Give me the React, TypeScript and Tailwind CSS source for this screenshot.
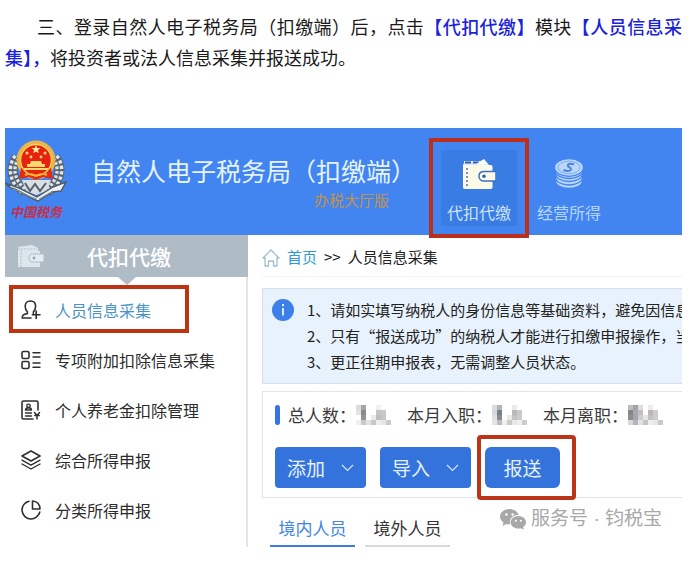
import type { ReactNode } from 'react';

const menuItems = [
  { label: '人员信息采集', icon: <UserAddIcon />, active: true },
  { label: '专项附加扣除信息采集', icon: <ListIcon /> },
  { label: '个人养老金扣除管理', icon: <PensionIcon /> },
  { label: '综合所得申报', icon: <LayersIcon /> },
  { label: '分类所得申报', icon: <PieIcon /> },
];

// Greys of the masked figures, 7 columns by 4 rows, '' leaves a cell blank
const masks = {
  total: [
    ['#dcdcdc', '#a5a5a5', '', '', '#f0f0f0', '', ''],
    ['#e3e3e3', '#8a8a8a', '', '', '#c4c4c4', '#c9c9c9', ''],
    ['', '#929292', '', '#e9e9e9', '#bdbdbd', '#c6c6c6', ''],
    ['#efefef', '#c9c9c9', '#e2e2e2', '#c8c8c8', '#ededed', '#e5e5e5', '#cbcbcb'],
  ],
  joined: [
    ['#dadada', '#b5b5b5', '', '', '#ececec', '', ''],
    ['#d3dadf', '#78818b', '', '', '#bdb9b5', '#c9c9c9', ''],
    ['#dfe2e2', '#858b92', '', '#e9e9e9', '#c5c2bf', '#cccccc', ''],
    ['#e5e5e5', '#bdbdbd', '#eeeeee', '#cacaca', '#e7e7e7', '#efefef', '#cccccc'],
  ],
  left: [
    ['#bcbcbc', '#a3a3a3', '#dedede', '', '#ededed', '', ''],
    ['#858585', '#a7a9b8', '#c8bdb0', '', '#b7b7b7', '#cdcdcd', ''],
    ['#8d8d8d', '#a3a6af', '#c7cdd6', '#e5e5e5', '#c1c1c1', '#cccccc', ''],
    ['#d9d9d9', '#b4b4b4', '#e3e3e3', '#c5c5c5', '#eeeeee', '#e5e5e5', '#c9c9c9'],
  ],
};

function Mosaic({ cells }: { cells: string[][] }) {
  return (
    <svg width="35" height="20" viewBox="0 0 35 20" className="shrink-0" aria-label="已隐藏" shapeRendering="crispEdges">
      {cells.map((row, y) =>
        row.map((fill, x) => fill && <rect key={`${x}-${y}`} x={x * 5} y={y * 5} width="5" height="5" fill={fill} />)
      )}
    </svg>
  );
}

function LineIcon({ children }: { children: ReactNode }) {
  return (
    <svg width="20" height="20" viewBox="0 0 20 20" fill="none" stroke="#2f2f2f" strokeWidth="1.6" strokeLinejoin="round" strokeLinecap="round" className="shrink-0">
      {children}
    </svg>
  );
}

function UserAddIcon() {
  return (
    <LineIcon>
      <path d="M10 18H1.200c0-2.600.8-3.600 5.200-4.400v-1.800C4.800 10.500 4.200 8.500 4.200 6.200 4.200 3 6.300 1 9.400 1s5.200 2 5.200 5.200c0 2.300-.7 4.300-2.200 5.600v1.700" />
      <path d="M15.200 11v7.500M11.400 14.800H19" />
    </LineIcon>
  );
}

function ListIcon() {
  return (
    <LineIcon>
      <rect x="1" y="1.500" width="7" height="7" rx="1.500" />
      <rect x="1" y="11.500" width="7" height="7" rx="1.500" />
      <path d="M12 2.800h7M12 7h7M12 13h7M12 17.200h7" strokeWidth="1.400" />
    </LineIcon>
  );
}

function PensionIcon() {
  return (
    <LineIcon>
      <path d="M17 10V2.500C17 1.500 16.500 1 15.500 1h-13C1.500 1 1 1.500 1 2.500v15c0 1 .5 1.500 1.500 1.500H12" />
      <circle cx="7.500" cy="5.800" r="1.700" strokeWidth="1.400" />
      <path d="M4.500 10c0-3 6-3 6 0zM4.500 13h6M4.500 16h6" strokeWidth="1.400" />
      <path d="M13.500 12.500l2.500 3 2.500-3M16 15.500V19M13.800 15.500h4.400" strokeWidth="1.500" />
    </LineIcon>
  );
}

function LayersIcon() {
  return (
    <LineIcon>
      <path d="M10 1l9 5-9 5-9-5z" />
      <path d="M1 10.200l9 5 9-5M1 14l9 5 9-5" strokeWidth="1.400" />
    </LineIcon>
  );
}

function PieIcon() {
  return (
    <LineIcon>
      <path d="M8 1.200A9 9 0 1 0 18.800 12" />
      <path d="M11.500 1v8H19c0-4.500-3-8-7.500-8z" />
    </LineIcon>
  );
}

function WalletIcon() {
  return (
    <svg width="34" height="34" viewBox="0 0 34 34">
      <path d="M2 3h17l5 4H2z" fill="#dcebff" />
      <path d="M3 4.500h22" stroke="#2f5cae" strokeWidth="2" strokeDasharray="6 2" />
      <path d="M14 6l8-5 5 6z" fill="#fff" />
      <path d="M1 4.500C1 6.500 2 7 4 7h24.500c1.500 0 2 .7 2 2v20c0 1.500-.7 2-2 2H3c-1.500 0-2-.7-2-2z" fill="#fbfae6" />
      <path d="M5 10v19" stroke="#5a78ad" strokeWidth="1.600" strokeDasharray="2 2" />
      <path d="M34 13.500H22c-3 0-5 2-5 4.700s2 4.800 5 4.800h12z" fill="#fbfae6" stroke="#3b70c9" strokeWidth="1.500" />
      <circle cx="22" cy="18.200" r="1.800" fill="#3563b3" />
    </svg>
  );
}

function CoinsIcon() {
  return (
    <svg width="30" height="32" viewBox="0 0 30 32" fill="none">
      <g fill="#b9d5fb" stroke="#4285ee" strokeWidth="1.300">
        <ellipse cx="15" cy="23" rx="13.500" ry="7.500" />
        <ellipse cx="15" cy="19.500" rx="13.500" ry="7.500" />
        <ellipse cx="15" cy="16" rx="13.500" ry="7.500" />
        <ellipse cx="15" cy="12.500" rx="14" ry="8" />
        <ellipse cx="15" cy="9.500" rx="14.500" ry="8.800" />
      </g>
      <ellipse cx="15" cy="9.500" rx="11" ry="6.300" stroke="#80b0f4" />
      <path d="M20 6.500c-4-1.500-7-.5-6 1.500.8 1.600 3.500 1.500 3 3.500-.6 1.800-4 2-7.500.5" stroke="#4c83d8" strokeWidth="2" />
    </svg>
  );
}

function Emblem() {
  return (
    <svg width="62" height="64" viewBox="0 0 62 64" fill="none">
      {/* wheat wreath */}
      <path d="M12 17C4 28 7 42 20 52M50 17c8 11 5 25-8 35" stroke="#56636f" strokeWidth="10" />
      <path d="M12 17C4 28 7 42 20 52M50 17c8 11 5 25-8 35" stroke="#dfe7ec" strokeWidth="8" strokeDasharray="3 2" />
      <path d="M12 17C4 28 7 42 20 52M50 17c8 11 5 25-8 35" stroke="#5d6a75" strokeWidth="1.300" />
      <path d="M17 40h29l-4 11-11 4-10-4z" fill="#d9e0e4" />
      <path d="M20 43l5 8 5-7 5 7 6-8" stroke="#56616b" strokeWidth="2" />
      {/* open book */}
      <path d="M0 43l14 5 18 9 16-10 13-5-5 9-9 1-14 9c-10-3-17-11-27-13z" fill="#eff3f5" stroke="#4e5c69" strokeWidth="1.400" />
      <path d="M8 49c8 2 16 8 24 10M34 59l14-8" stroke="#89959e" />
      {/* national emblem */}
      <circle cx="31" cy="20" r="19.500" fill="#e9b449" />
      <path d="M16 28l-2 11 10-2 7 3 7-3 10 2-2-11z" fill="#e32b13" />
      <circle cx="31" cy="20" r="15.500" fill="#e7230f" stroke="#f6cf58" strokeWidth="1.500" />
      <path d="M31 5l1.200 3 3.300.1-2.600 2 .9 3.100-2.800-1.800-2.800 1.800.9-3.100-2.600-2 3.300-.1z" fill="#ffeaa0" />
      <g fill="#ffd970">
        <circle cx="22" cy="13" r="1.500" />
        <circle cx="40" cy="13" r="1.500" />
        <circle cx="26" cy="17" r="1.400" />
        <circle cx="36" cy="17" r="1.400" />
        <path d="M25 24l1-3h10l1 3h3v3H22v-3z" />
        <path d="M19 28h24v2H19z" />
      </g>
      <path d="M20 35c4-2 7-1 11 1 4-2 7-3 11-1" stroke="#f2b13a" strokeWidth="2" />
    </svg>
  );
}

function Chevron() {
  return (
    <svg width="13" height="8" viewBox="0 0 13 8" fill="none" stroke="#d5e6ff" strokeWidth="1.200">
      <path d="M1 1l5.500 5.500L12 1" />
    </svg>
  );
}

function TopBar() {
  return (
    <header className="flex items-start bg-[#4285f1]">
      <div className="flex w-[62px] shrink-0 flex-col items-center pt-3">
        <Emblem />
        <span className="whitespace-nowrap font-['Noto_Sans_CJK_SC',sans-serif] text-[13px] font-bold italic leading-4 text-[#c5304a]">中国税务</span>
      </div>
      <div className="ml-6 shrink-0 pt-[26px]">
        <h1 className="whitespace-nowrap text-[25px] leading-8 text-[#e4f3ff]">自然人电子税务局（扣缴端）</h1>
        <p className="pr-[27px] text-right text-[15px] leading-7 text-[#c2924a]">办税大厅版</p>
      </div>
      <nav className="ml-[13px] flex shrink-0 items-start gap-2 pt-2.5">
        <div className="relative z-10 -mb-[3px] border-4 border-[#bb301d] bg-[#4285f1] p-2">
          <button type="button" className="flex h-[76px] w-[76px] flex-col items-center justify-between bg-[#397ce3] pb-0.5 pt-2 text-base leading-6 text-[#cfe3ff]">
            <WalletIcon />
            代扣代缴
          </button>
        </div>
        <button type="button" className="mt-3 flex h-[76px] flex-col items-center justify-between pb-0.5 pt-2 text-base leading-6 text-[#b5d3ff]">
          <CoinsIcon />
          经营所得
        </button>
      </nav>
    </header>
  );
}

function Sidebar() {
  return (
    <aside className="w-[243px] shrink-0 border-r-2 border-[#e3e5e8]">
      <div className="relative -mr-0.5 flex h-[42px] items-center bg-[#afbbc5] pl-3">
        <svg width="27" height="25" viewBox="0 0 27 25">
          <path d="M1 3l14-2 6 3v3h2v16H1z" fill="#dde6ec" />
          <path d="M4 6v17M1 5h19" stroke="#b5c0c9" strokeDasharray="2 1" />
          <path d="M27 10H15c-4 0-4 8 0 8h12z" fill="#e3ebf0" stroke="#afbbc5" />
          <circle cx="17" cy="14" r="1.400" fill="#98a5b0" />
        </svg>
        <h2 className="ml-[43px] text-[21px] font-medium leading-7 text-white">代扣代缴</h2>
        <svg width="18" height="8" viewBox="0 0 18 8" className="absolute left-[113px] top-full">
          <path d="M0 0h18L9 8z" fill="#afbbc5" />
        </svg>
      </div>
      <ul className="pb-3 pt-2">
        {menuItems.map((item) => (
          <li key={item.label} className="relative">
            {item.active && <span className="pointer-events-none absolute bottom-0.5 left-1 top-0 w-[180px] border-4 border-[#bd3413]" />}
            <a href="#" className={`flex h-[50px] items-center gap-3.5 pl-4 text-base ${item.active ? 'text-[#4a94c5]' : 'text-[#2b2b2b]'}`}>
              {item.icon}
              {item.label}
            </a>
          </li>
        ))}
      </ul>
    </aside>
  );
}

function Notice() {
  return (
    <div className="mt-[11px] flex items-start border border-r-0 border-[#d3e0e9] bg-[#e8f2fc] py-2 pl-[9px] text-[15px] leading-[26px] text-[#222]">
      <svg width="22" height="22" viewBox="0 0 22 22" className="mr-[13px] mt-0.5 shrink-0">
        <circle cx="11" cy="11" r="11" fill="#3d7fe9" />
        <path d="M11 5v2.300M11 9v7.500" stroke="#dcecff" strokeWidth="2" />
      </svg>
      <div className="min-w-0 overflow-hidden whitespace-nowrap">
        <p>1、请如实填写纳税人的身份信息等基础资料，避免因信息</p>
        <p>2、只有“报送成功”的纳税人才能进行扣缴申报操作，当</p>
        <p>3、更正往期申报表，无需调整人员状态。</p>
      </div>
    </div>
  );
}

function ActionPanel() {
  return (
    <section className="mt-[7px] border border-r-0 border-[#e3e3e3] pb-[9px] pl-3 pt-[11px]">
      <div className="flex h-6 items-center whitespace-nowrap text-[17px] leading-6 text-[#3a3a3a]">
        <span className="mr-2 h-5 w-[5px] shrink-0 rounded-sm bg-[#3474e6]" />
        <span>总人数：</span>
        <Mosaic cells={masks.total} />
        <span className="ml-4">本月入职：</span>
        <Mosaic cells={masks.joined} />
        <span className="ml-4">本月离职：</span>
        <Mosaic cells={masks.left} />
      </div>
      <div className="mt-5 flex items-center gap-3.5 text-[19px] leading-[41px] text-[#e6f1ff]">
        <button type="button" className="flex w-[91px] items-center justify-between rounded bg-[#3573dc] px-3">
          添加
          <Chevron />
        </button>
        <button type="button" className="flex w-[91px] items-center justify-between rounded bg-[#3573dc] px-3">
          导入
          <Chevron />
        </button>
        <div className="relative">
          <button type="button" className="w-[75px] rounded-md bg-[#3573dc] text-center">
            报送
          </button>
          <span className="pointer-events-none absolute -bottom-3 -left-2 -right-4 -top-3 z-10 rounded-sm border-4 border-[#bb3418]" />
        </div>
      </div>
    </section>
  );
}

function WeChatMark() {
  return (
    <div className="absolute bottom-3.5 right-5 flex items-center gap-[5px] text-[19px] leading-7 text-[#a8a8a8]">
      <svg width="26" height="22" viewBox="0 0 26 22">
        <path d="M9.500 1C4.300 1 0 4.300 0 8.600c0 2.400 1.300 4.500 3.400 5.900L2.600 18l3.700-1.900c1 .3 2.100.4 3.200.4h.6C8.800 11 12.500 6.900 18.600 6.700 17.500 3.400 13.800 1 9.500 1z" fill="#a8a8a8" />
        <path d="M26 14.300c0-3.500-3.500-6.300-7.700-6.300s-7.700 2.800-7.700 6.300 3.500 6.300 7.700 6.300c.9 0 1.800-.1 2.600-.4l2.900 1.500-.7-2.600c1.800-1.100 2.900-2.900 2.900-4.800z" fill="#a8a8a8" />
        <g fill="#fff">
          <circle cx="6.400" cy="6.500" r="1.200" />
          <circle cx="12.600" cy="6.500" r="1.200" />
          <circle cx="15.800" cy="12.700" r="1" />
          <circle cx="20.900" cy="12.700" r="1" />
        </g>
      </svg>
      <span className="whitespace-nowrap font-['Liberation_Sans','Noto_Sans_CJK_SC',sans-serif]">服务号 · 钧税宝</span>
    </div>
  );
}

export default function App() {
  return (
    <main lang="zh-CN" className="bg-white pb-4 pl-[5px] pr-[17px] pt-[11px] font-['Noto_Sans_CJK_SC',sans-serif]">
      <p className="text-justify indent-8 text-lg leading-[31px] text-[#1a1a1a]">
        三、登录自然人电子税务局（扣缴端）后，点击
        <strong className="font-medium text-[#1a22dc]">【代扣代缴】</strong>模块
        <strong className="font-medium text-[#1a22dc]">【人员信息采集】，</strong>
        将投资者或法人信息采集并报送成功。
      </p>

      <div className="relative mt-[55px] overflow-hidden">
        <TopBar />
        <div className="flex">
          <Sidebar />
          <div className="min-w-0 flex-1 pl-3.5">
            <div className="flex h-[42px] items-center border-b border-[#f4f4f4] pt-1 text-[15px] text-[#222]">
              <svg width="18" height="18" viewBox="0 0 18 18" fill="none" stroke="#9dbdcf" strokeWidth="1.300" className="mr-[7px] shrink-0">
                <path d="M1 9l8-8 8 8h-2v8h-3.500v-5h-5v5H3V9z" strokeLinejoin="round" />
              </svg>
              <a href="#" className="text-[#2e9ad0]">首页</a>
              <span className="mx-[7px]">&gt;&gt;</span>
              <span>人员信息采集</span>
            </div>
            <Notice />
            <ActionPanel />
            <div className="mt-3 flex gap-2.5 pl-2 text-[17px]">
              <button type="button" className="h-[37px] w-[85px] border-b-2 border-[#3c7bdf] text-[#4285e8]">境内人员</button>
              <button type="button" className="h-[37px] w-[85px] border-b-2 border-[#d5d8dc] text-[#333]">境外人员</button>
            </div>
          </div>
        </div>
        <WeChatMark />
      </div>
    </main>
  );
}
